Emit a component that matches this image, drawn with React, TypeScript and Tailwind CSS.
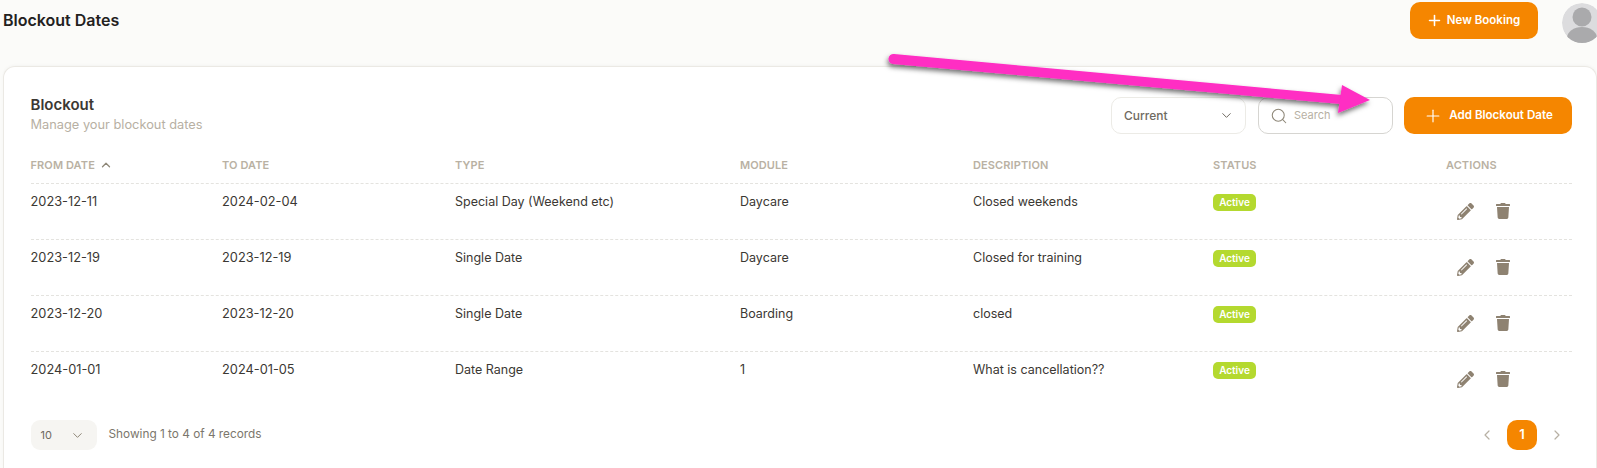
import { ChevronDown, ChevronLeft, ChevronRight, ChevronUp, Plus, Search } from "lucide-react";
import { FaPencilAlt, FaTrash } from "react-icons/fa";

const rows = [
  ["2023-12-11", "2024-02-04", "Special Day (Weekend etc)", "Daycare", "Closed weekends"],
  ["2023-12-19", "2023-12-19", "Single Date", "Daycare", "Closed for training"],
  ["2023-12-20", "2023-12-20", "Single Date", "Boarding", "closed"],
  ["2024-01-01", "2024-01-05", "Date Range", "1", "What is cancellation??"],
];

const cols = "grid grid-cols-[191.5px_233px_285px_233px_240px_233px_126px]";

function Avatar() {
  return (
    <svg viewBox="0 0 40 40" className="h-10 w-10 shrink-0 rounded-full">
      <circle cx="20" cy="20" r="20" fill="#dcdcde" />
      <circle cx="20" cy="14" r="9.5" fill="#aaaaac" />
      <ellipse cx="20" cy="35" rx="15" ry="11" fill="#aaaaac" />
    </svg>
  );
}

export default function App() {
  return (
    <div className="relative h-[468px] w-[1597px] overflow-hidden bg-[#fbfbf9] font-['Inter',sans-serif]">
      <header className="flex h-[66px] items-start justify-between pl-[3px]">
        <h1 className="mt-[10px] text-[16px] leading-5 font-semibold text-[#23211e]">Blockout Dates</h1>
        <div className="-mr-[5px] flex items-start gap-6">
          <button className="mt-[2px] flex h-[37px] w-[128px] items-center justify-center gap-[4px] rounded-[10px] bg-[#f58600] pr-[2px] text-[11.5px] font-semibold text-white">
            <Plus size={17} strokeWidth={2.2} />
            New Booking
          </button>
          <div className="mt-[3px]">
            <Avatar />
          </div>
        </div>
      </header>

      <main className="ml-[3px] h-[402px] rounded-t-[12px] border border-b-0 border-[#ebe9e4] bg-white pt-[30px] pr-[24px] pl-[26.5px] shadow-[0_-1px_3px_rgba(0,0,0,0.03)]">
        <div className="flex items-start justify-between">
          <div className="-mt-[1px]">
            <h2 className="text-[15px] leading-[18px] font-semibold text-[#3b3833]">Blockout</h2>
            <p className="mt-[2px] text-[12.8px] leading-[18px] text-[#b7b0a3]">Manage your blockout dates</p>
          </div>
          <div className="flex items-center">
            <div className="flex h-[37px] w-[135px] items-center justify-between rounded-[10px] border border-[#ecebe6] pr-[11px] pl-[12px] text-[12px] font-medium text-[#6f6a61]">
              Current
              <ChevronDown size={15} strokeWidth={1.6} className="text-[#6f6a61]" />
            </div>
            <div className="ml-[12px] flex h-[37px] w-[135px] items-center rounded-[10px] border border-[#d6d5d1] pl-[11px] text-[11px] text-[#b7b0a3]">
              <Search size={18} strokeWidth={1.4} className="text-[#8e8778]" />
              <span className="ml-[6px]">Search</span>
            </div>
            <button className="ml-[11px] flex h-[37px] w-[168px] items-center justify-center gap-[6px] rounded-[10px] bg-[#f58600] text-[11.6px] font-semibold text-white">
              <Plus size={20} strokeWidth={1.4} />
              Add Blockout Date
            </button>
          </div>
        </div>

        <div className={`${cols} mt-[21px] h-[28px] items-center pb-[8px] text-[11px] font-semibold tracking-[0.1px] text-[#b9b1a3] uppercase`}>
          <div className="flex items-center gap-[4px]">
            From Date
            <ChevronUp size={14} strokeWidth={2.2} className="text-[#8e8778]" />
          </div>
          <div>To Date</div>
          <div>Type</div>
          <div>Module</div>
          <div>Description</div>
          <div>Status</div>
          <div>Actions</div>
        </div>

        {rows.map((r) => (
          <div key={r[0]} className={`${cols} h-[56px] border-t border-dashed border-[#e4e3df] text-[#3b3833]`}>
            {r.map((c, i) => (
              <div key={i} className={`pt-[9px] leading-[17px] ${i < 2 ? "text-[12.8px]" : "text-[12.5px]"}`}>
                {c}
              </div>
            ))}
            <div className="flex items-start pt-[10px]">
              <span className="flex h-[17px] w-[43px] items-center justify-center rounded-[5px] bg-[#b4d92f] text-[10px] font-semibold text-white">
                Active
              </span>
            </div>
            <div className="flex items-start gap-[21px] pt-[19px] pl-[11px] text-[#8e8271]">
              <FaPencilAlt size={17} />
              <FaTrash size={16} />
            </div>
          </div>
        ))}

        <div className="mt-[13px] flex items-center justify-between">
          <div className="flex items-center">
            <div className="flex h-[30px] w-[66px] items-center justify-between rounded-[9px] bg-[#f6f5f2] pr-[12px] pl-[10px] text-[11px] text-[#6f6a61]">
              10
              <ChevronDown size={15} strokeWidth={1.6} className="text-[#8e8778]" />
            </div>
            <span className="ml-[12px] text-[11.8px] text-[#7b766c]">Showing 1 to 4 of 4 records</span>
          </div>
          <div className="mr-[7px] flex items-center">
            <ChevronLeft size={16} strokeWidth={1.8} className="text-[#b7b0a3]" />
            <div className="mx-[12px] flex h-[30px] w-[30px] items-center justify-center rounded-[10px] bg-[#f58600] text-[13px] font-semibold text-white">
              1
            </div>
            <ChevronRight size={16} strokeWidth={1.8} className="text-[#b7b0a3]" />
          </div>
        </div>
      </main>

      <svg className="pointer-events-none absolute top-0 left-0 h-[468px] w-[1597px]" viewBox="0 0 1597 468">
        <defs>
          <filter id="arrowShadow" x="-5%" y="-50%" width="110%" height="220%">
            <feDropShadow dx="-1" dy="3" stdDeviation="2.5" floodColor="#000" floodOpacity="0.55" />
          </filter>
        </defs>
        <g filter="url(#arrowShadow)" fill="#ff2dc3">
          <path d="M894 54 L1342 95 L1341 104 L893 64 A5 5 0 0 1 894 54 Z" />
          <path d="M1342 85 L1370 100 L1338 113 Z" />
        </g>
      </svg>
    </div>
  );
}
